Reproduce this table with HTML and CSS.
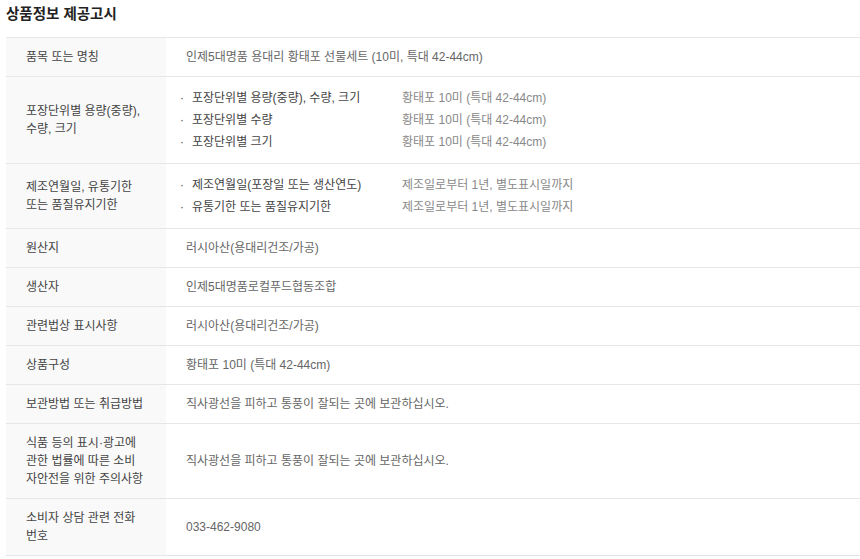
FILE: index.html
```html
<!DOCTYPE html>
<html lang="ko">
<head>
<meta charset="utf-8">
<title>상품정보 제공고시</title>
<link rel="stylesheet" href="styles.css">
</head>
<body>
<div class="notice">
  <h2 class="notice-title">상품정보 제공고시</h2>
  <table class="info-table">
    <tbody>
      <tr>
        <th>품목 또는 명칭</th>
        <td>인제5대명품 용대리 황태포 선물세트 (10미, 특대 42-44cm)</td>
      </tr>
      <tr>
        <th>포장단위별 용량(중량), 수량, 크기</th>
        <td>
          <ul class="spec-list">
            <li><span class="dot">·</span><span class="label">포장단위별 용량(중량), 수량, 크기</span><span class="value">황태포 10미 (특대 42-44cm)</span></li>
            <li><span class="dot">·</span><span class="label">포장단위별 수량</span><span class="value">황태포 10미 (특대 42-44cm)</span></li>
            <li><span class="dot">·</span><span class="label">포장단위별 크기</span><span class="value">황태포 10미 (특대 42-44cm)</span></li>
          </ul>
        </td>
      </tr>
      <tr>
        <th>제조연월일, 유통기한 또는 품질유지기한</th>
        <td>
          <ul class="spec-list">
            <li><span class="dot">·</span><span class="label">제조연월일(포장일 또는 생산연도)</span><span class="value">제조일로부터 1년, 별도표시일까지</span></li>
            <li><span class="dot">·</span><span class="label">유통기한 또는 품질유지기한</span><span class="value">제조일로부터 1년, 별도표시일까지</span></li>
          </ul>
        </td>
      </tr>
      <tr>
        <th>원산지</th>
        <td>러시아산(용대리건조/가공)</td>
      </tr>
      <tr>
        <th>생산자</th>
        <td>인제5대명품로컬푸드협동조합</td>
      </tr>
      <tr>
        <th>관련법상 표시사항</th>
        <td>러시아산(용대리건조/가공)</td>
      </tr>
      <tr>
        <th>상품구성</th>
        <td>황태포 10미 (특대 42-44cm)</td>
      </tr>
      <tr>
        <th>보관방법 또는 취급방법</th>
        <td>직사광선을 피하고 통풍이 잘되는 곳에 보관하십시오.</td>
      </tr>
      <tr>
        <th>식품 등의 표시·광고에 관한 법률에 따른 소비자안전을 위한 주의사항</th>
        <td>직사광선을 피하고 통풍이 잘되는 곳에 보관하십시오.</td>
      </tr>
      <tr>
        <th>소비자 상담 관련 전화 번호</th>
        <td>033-462-9080</td>
      </tr>
    </tbody>
  </table>
</div>
</body>
</html>
```

FILE: styles.css
```css
html, body {
  margin: 0;
  padding: 0;
  background: #ffffff;
}

body {
  font-family: "Liberation Sans", "Noto Sans CJK KR", sans-serif;
  font-size: 12px;
  color: #666666;
}

.notice {
  padding: 4px 0 0 6px;
}

.notice-title {
  margin: 0 0 13px 0;
  font-size: 14.5px;
  line-height: 20px;
  font-weight: bold;
  color: #222222;
}

.info-table {
  width: 100%;
  border-collapse: collapse;
  border-top: 1px solid #e6e6e6;
}

.info-table th,
.info-table td {
  border-bottom: 1px solid #e6e6e6;
  padding: 10px 20px;
  line-height: 18px;
  vertical-align: middle;
  text-align: left;
}

.info-table th {
  width: 120px;
  background: #f9f9f9;
  font-weight: normal;
  color: #444444;
}

.info-table td {
  color: #666666;
}

.spec-list {
  list-style: none;
  margin: 0 0 0 -6px;
  padding: 0;
}

.spec-list li {
  display: grid;
  grid-template-columns: 12px 210px auto;
  line-height: 22px;
}

.spec-list .dot {
  color: #555555;
}

.spec-list .label {
  color: #444444;
}

.spec-list .value {
  color: #888888;
}
```
